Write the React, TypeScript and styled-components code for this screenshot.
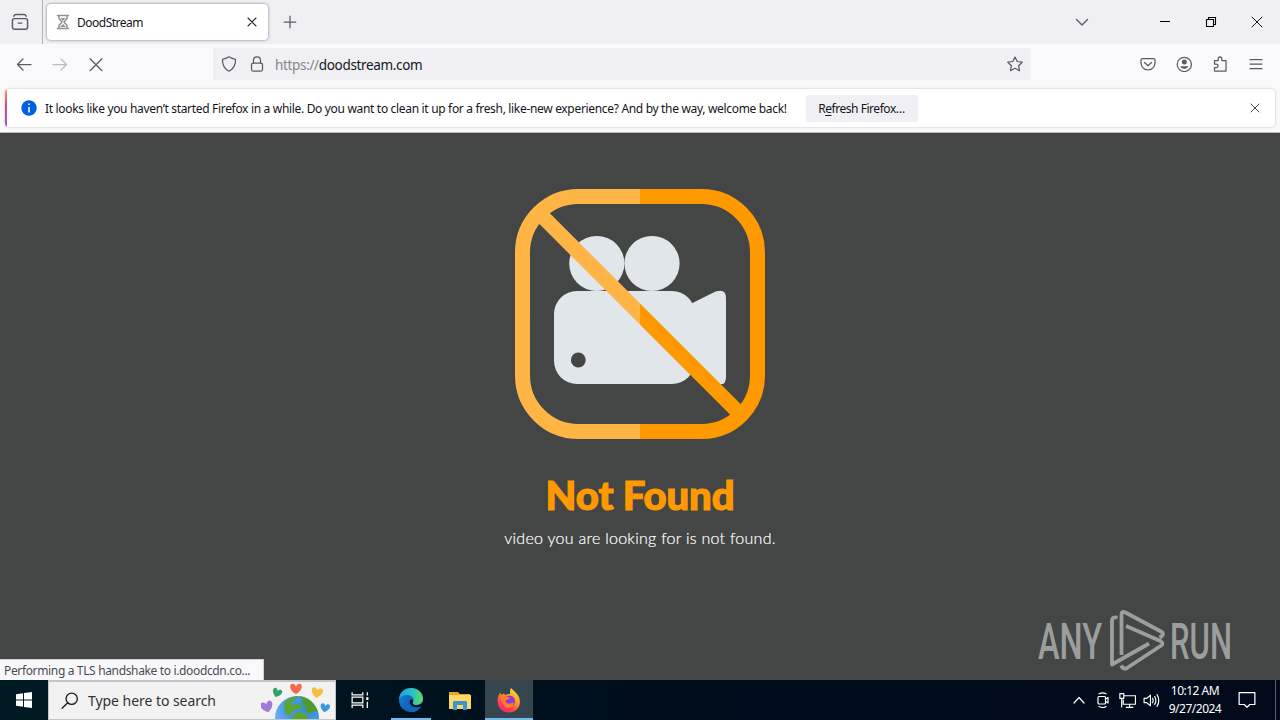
import React from 'react';
import styled, { createGlobalStyle } from 'styled-components';

const Global = createGlobalStyle`
  * { box-sizing: border-box; }
  body { margin: 0; background: #434645; font-family: "Noto Sans", "Open Sans", sans-serif; }
`;

const Screen = styled.div`
  width: 1280px;
  height: 720px;
  display: flex;
  flex-direction: column;
  overflow: hidden;
`;

const TabBar = styled.header`
  height: 44px;
  flex: none;
  display: flex;
  align-items: center;
  background: #f0eff4;
  color: #15141a;
`;

const Spacer = styled.div`
  flex: 1;
`;

const Slot = styled.div<{ $w: number; $color?: string }>`
  width: ${p => p.$w}px;
  height: 100%;
  flex: none;
  display: flex;
  align-items: center;
  justify-content: center;
  color: ${p => p.$color ?? '#5b5b66'};
`;

const ViewSlot = styled(Slot)`
  border-right: 1px solid #b2b1b8;
  padding-right: 2px;
  margin-right: 4px;
`;

const Tab = styled.div`
  width: 221px;
  height: 36px;
  padding: 0 8px;
  display: flex;
  align-items: center;
  background: #fff;
  border-radius: 4px;
  box-shadow: 0 0 3px rgba(0, 0, 0, 0.5);
`;

const TabTitle = styled.span`
  flex: 1;
  margin-left: 6px;
  padding-top: 1px;
  font-size: 12px;
  letter-spacing: -0.5px;
`;

const Toolbar = styled.div`
  height: 41px;
  flex: none;
  display: flex;
  align-items: center;
  padding: 0 6px 1px 0;
  background: #f9f9fb;
`;

const UrlBar = styled.div`
  width: 817px;
  height: 32px;
  margin-left: 97px;
  padding: 0 7px 0 8px;
  display: flex;
  align-items: center;
  gap: 12px;
  background: #f0f0f4;
  color: #5b5b66;
`;

const Url = styled.span`
  flex: 1;
  margin-left: -2px;
  padding-top: 1px;
  font-size: 13.5px;
  letter-spacing: -0.34px;
  color: #85848c;
  b { font-weight: 400; color: #15141a; }
`;

const NoticeArea = styled.div`
  height: 48px;
  flex: none;
  padding: 4px 5px 5px;
  background: #f9f9fa;
  border-bottom: 1px solid #bdbdbd;
`;

const Notice = styled.div`
  height: 38px;
  display: flex;
  align-items: center;
  padding-right: 12px;
  background: #fff;
  border-radius: 4px;
  box-shadow: 0 0 2px rgba(0, 0, 0, 0.3);
  overflow: hidden;
  font-size: 12px;
  color: #15141a;
`;

const Accent = styled.div`
  width: 2px;
  height: 100%;
  margin-right: 14px;
  background: linear-gradient(#ff9a50, #d9488c 45%, #9059d0);
`;

const NoticeText = styled.span`
  width: 761px;
  margin-left: 8px;
  padding-top: 1px;
  white-space: nowrap;
  letter-spacing: -0.323px;
`;

const RefreshButton = styled.button`
  width: 112px;
  height: 27px;
  padding: 1px 1px 0 0;
  border: 0;
  border-radius: 3px;
  background: #f0eff3;
  color: #15141a;
  font: inherit;
  letter-spacing: -0.45px;
  u { text-underline-offset: 2px; }
`;

const Page = styled.main`
  height: 547px;
  flex: none;
  position: relative;
  display: flex;
  flex-direction: column;
  align-items: center;
  padding-top: 56px;
  background: #434645;
  font-family: Lato, sans-serif;
`;

const Title = styled.h1`
  margin: 32px 0 0;
  font-size: 40px;
  line-height: 48px;
  font-weight: 900;
  letter-spacing: -0.1px;
  color: #ff9900;
  -webkit-text-stroke: 1.2px #ff9900;
`;

const Subtitle = styled.p`
  margin: 7px 0 0;
  font-size: 16px;
  line-height: 24px;
  font-weight: 300;
  letter-spacing: 0.27px;
  color: #fff;
  -webkit-text-stroke: 0.2px #fff;
`;

const Status = styled.div`
  position: absolute;
  left: 0;
  bottom: 0;
  width: 264px;
  height: 21px;
  padding-left: 4px;
  line-height: 22px;
  background: #f9f9fb;
  border-top: 1px solid #d0d0d4;
  border-right: 1px solid #d0d0d4;
  font-family: "Noto Sans", sans-serif;
  font-size: 12px;
  letter-spacing: -0.35px;
  color: #4a4a52;
  white-space: nowrap;
`;

const Watermark = styled.div`
  position: absolute;
  right: 42px;
  bottom: 6px;
  height: 66px;
  svg { overflow: visible; }
`;

const Taskbar = styled.footer`
  height: 40px;
  flex: none;
  display: flex;
  align-items: center;
  background: linear-gradient(90deg, #001a24, #000e1c 50%, #020a1c);
  color: #fff;
`;

const Search = styled.div`
  width: 288px;
  height: 40px;
  display: flex;
  align-items: center;
  padding-left: 12px;
  background: #f2f2f2;
  border: 1px solid #c2c4c5;
  border-width: 2px 1px 1px 1px;
  color: #1c1c1c;
`;

const SearchText = styled.span`
  flex: 1;
  margin-left: 9px;
  font-size: 14px;
  letter-spacing: -0.05px;
  color: #333;
  white-space: nowrap;
`;

const TaskButton = styled.div<{ $active?: boolean; $running?: boolean }>`
  width: 48px;
  height: 40px;
  display: flex;
  align-items: center;
  justify-content: center;
  background: ${p => (p.$active ? '#35464f' : 'transparent')};
  box-shadow: ${p => (p.$running ? 'inset 0 -2px #76b9ed' : 'none')};
`;

const RunButton = styled(TaskButton)`
  width: 40px;
  margin: 0 6px 0 7px;
`;

const FolderButton = styled(TaskButton)`
  padding-right: 2px;
`;

const Clock = styled.div`
  width: 64px;
  display: flex;
  flex-direction: column;
  align-items: center;
  font-size: 12px;
  line-height: 18px;
  letter-spacing: -0.5px;
  white-space: nowrap;
`;

const DesktopEdge = styled.div`
  width: 5px;
  height: 40px;
  margin-left: 8px;
  border-left: 1px solid #5a606b;
`;

type IconProps = { s?: number; w?: number; vb?: number; children: React.ReactNode };
const Icon = ({ s = 16, w = 1.25, vb = 16, children }: IconProps) => (
  <svg width={s} height={s} viewBox={`0 0 ${vb} ${vb}`} fill="none" stroke="currentColor"
    strokeWidth={w} strokeLinecap="round" strokeLinejoin="round">{children}</svg>
);

const Cross = ({ s = 16, w = 1.2, inset = 3 }: { s?: number; w?: number; inset?: number }) => (
  <Icon s={s} w={w}><path d={`M${inset} ${inset}L${16 - inset} ${16 - inset}M${16 - inset} ${inset}L${inset} ${16 - inset}`} /></Icon>
);

const NoVideoArt = styled.svg`
  flex: none;
`;

const NoVideo = () => (
  <NoVideoArt width="250" height="250" viewBox="0 0 250 250">
    <defs>
      <linearGradient id="halves" gradientUnits="userSpaceOnUse" x1="0" y1="0" x2="250" y2="0">
        <stop offset=".5" stopColor="#ffb546" /><stop offset=".5" stopColor="#ff9900" />
      </linearGradient>
    </defs>
    <g fill="#e0e6e9">
      <circle cx="81.8" cy="74.5" r="27.6" />
      <circle cx="137" cy="74.5" r="27.6" />
      <rect x="39" y="102" width="141" height="93" rx="23" />
      <path d="M176 114.800L200 102.800Q211 99 211 109V188Q211 197 203 195L176 181Z" />
    </g>
    <circle cx="63.300" cy="171" r="7.400" fill="#434645" />
    <g fill="none" stroke="url(#halves)" strokeWidth="15">
      <rect x="7.500" y="7.500" width="235" height="235" rx="56" />
      <path d="M25 25L225 225" />
    </g>
  </NoVideoArt>
);

const AnyRun = () => (
  <svg width="200" height="66" viewBox="0 0 200 66" fill="none">
    <g fill="#9c9e9d" fontFamily="Roboto, sans-serif" fontSize="50" fontWeight="500">
      <text x="0" y="50.500" textLength="64" lengthAdjust="spacingAndGlyphs">ANY</text>
      <text x="132" y="50.500" textLength="62" lengthAdjust="spacingAndGlyphs">RUN</text>
    </g>
    <g stroke="#9c9e9d" strokeWidth="3.800" strokeLinejoin="round">
      <path d="M79.500 9.500Q74 8.500 74 12.500V56.500L111 35.500" />
      <path d="M83.500 47V6.500Q83.500 2.800 87 4.300L123 23.500Q126.500 25.500 124 28L121.500 29.500" />
      <path d="M88 18L122.500 33Q126.500 35.500 122.500 38L89 60Q85.500 62 83 57.500" />
    </g>
  </svg>
);

const Earth = () => (
  <svg width="74" height="37" viewBox="0 0 74 37">
    <defs>
      <radialGradient id="sea" cx=".7" cy=".3" r=".8">
        <stop offset="0" stopColor="#2f8fd8" /><stop offset=".6" stopColor="#4c9bea" /><stop offset="1" stopColor="#79b8f7" />
      </radialGradient>
      <path id="heart" d="M0 5C-8 0-6-6-2.500-5Q-.5-4.500 0-2.500Q.5-4.500 2.500-5C6-6 8 0 0 5Z" />
    </defs>
    <circle cx="36" cy="36" r="22" fill="url(#sea)" />
    <path d="M23 21Q29 14.500 37 14L35 17L29 21L32 23L38 22L42 25L38 28L34 27L31 31L27 34L24 30Z" fill="#5fa52c" />
    <path d="M38 14Q51 15 57 30L53 29L49 32L44 29L45 24L41 22L42 18Z" fill="#4f9a2a" />
    <path d="M30 37L33 32L40 30L46 33L47 37Z" fill="#5fa52c" />
    <use href="#heart" transform="translate(35 7) scale(1.05)" fill="#f26a4f" />
    <use href="#heart" transform="translate(16 11) rotate(20) scale(.85)" fill="#2fa26a" />
    <use href="#heart" transform="translate(56 11) rotate(10)" fill="#f8bd35" />
    <use href="#heart" transform="translate(6 25) rotate(-15) scale(1.1)" fill="#a47ad8" />
    <use href="#heart" transform="translate(64 26) rotate(10) scale(.85)" fill="#3d96e0" />
  </svg>
);

const Edge = () => (
  <svg width="26" height="26" viewBox="0 0 26 26">
    <defs>
      <linearGradient id="edgeTop" x1="0" y1=".4" x2="1" y2=".5">
        <stop offset="0" stopColor="#1b9ee0" /><stop offset=".55" stopColor="#2bc2c8" /><stop offset="1" stopColor="#62d95a" />
      </linearGradient>
      <linearGradient id="edgeLow" x1="0" y1="0" x2="1" y2="1">
        <stop offset="0" stopColor="#1583d8" /><stop offset="1" stopColor="#0c4fa0" />
      </linearGradient>
    </defs>
    <circle cx="13" cy="13" r="12" fill="url(#edgeLow)" />
    <path d="M1 13C1 5 7 1 13 1C20 1 25 6 25 11.500C25 16 21 18 18 18C15 18 14 16.500 15 15C17 12 14 8 9.500 8C5 8 2 10 1 13Z" fill="url(#edgeTop)" />
    <path d="M10 10C7 14 10 21 17 21C20 21 22 20 23.500 19C21 23 18 25 14 25C8 24 5 15 10 10Z" fill="#1167bd" />
    <path d="M14.500 12.500C16 16 14 15 15 17C17 19.500 22 18 25.200 15.500L24.500 19C18 22 11 19 11.500 14Q12 12 14.500 12.500Z" fill="#001620" />
  </svg>
);

const Folder = () => (
  <svg width="22" height="19" viewBox="0 0 22 19">
    <path d="M0 1H9L11 3H21V18H0Z" fill="#e9a520" />
    <path d="M0 4H22V18H0Z" fill="#ffd766" />
    <path d="M4 19V11Q4 10 5 10H17Q18 10 18 11V19H14V14H8V19Z" fill="#3c94d2" />
  </svg>
);

const Firefox = () => (
  <svg width="24" height="25" viewBox="0 0 24 25">
    <defs>
      <linearGradient id="fox" x1=".8" y1="0" x2=".2" y2="1">
        <stop offset="0" stopColor="#ffe23a" /><stop offset=".4" stopColor="#ff9a26" /><stop offset=".75" stopColor="#ff3d4e" /><stop offset="1" stopColor="#e5258b" />
      </linearGradient>
    </defs>
    <path d="M14 0C16 2 20 5 22 9C25 17 20 24.500 12 24.500C5 24.500 0 19 .5 12C.7 9 2 6 3.500 4.500L4 7L7 5.500L8 7C10 6.500 11 6 13 6C13 3 13 1 14 0Z" fill="url(#fox)" />
    <circle cx="12.500" cy="13" r="5.500" fill="#8a3ed6" />
    <path d="M4 8Q8 6 11 9L13 10Q11 12 9 12Q8 14 10 15Q13 17 16 14Q17 20 11 20Q5 19 4 8Z" fill="#ff7a2c" />
  </svg>
);

export default function App() {
  return (
    <Screen>
      <Global />
      <TabBar>
        <ViewSlot $w={43}>
          <Icon s={18} w={1.3}><rect x="1.300" y="5" width="13.400" height="9.500" rx="1.800" /><path d="M2.500 2.800Q3 1.300 4.500 1.300H11.500Q13 1.300 13.500 2.800M6.500 9H9.500" /></Icon>
        </ViewSlot>
        <Tab>
          <Slot $w={16} $color="#8f8f96">
            <Icon s={16} w={1.5}><path d="M2.500 1.500H13.500M2.500 14.500H13.500M4 2V4.500L7 8L4 11.500V14M12 2V4.500L9 8L12 11.500V14" /><path d="M5.500 4H10.500L8 7ZM5 13L8 10L11 13Z" fill="currentColor" stroke="none" /></Icon>
          </Slot>
          <TabTitle>DoodStream</TabTitle>
          <Slot $w={16} $color="#2b2a33"><Cross inset={4} w={1.1} /></Slot>
        </Tab>
        <Slot $w={43}><Icon><path d="M8 2.200V13.800M2.200 8H13.800" /></Icon></Slot>
        <Spacer />
        <Slot $w={40}><Icon w={1.4}><path d="M2.500 5.500L8 11L13.500 5.500" /></Icon></Slot>
        <Slot $w={40} />
        <Slot $w={46} $color="#000"><Icon w={1}><path d="M3 7.500H13" strokeLinecap="butt" /></Icon></Slot>
        <Slot $w={46} $color="#000"><Icon w={1.1}><path d="M3.500 5.500H10.500V12.500H3.500ZM5.500 5.500V3.500H12.500V10.500H10.500" /></Icon></Slot>
        <Slot $w={46} $color="#000"><Cross w={0.9} /></Slot>
      </TabBar>
      <Toolbar>
        <Slot $w={6} />
        <Slot $w={36}><Icon><path d="M15 8.500H1.500M7 3L1.500 8.500L7 14" /></Icon></Slot>
        <Slot $w={36} $color="#bdbcc3"><Icon><path d="M1 8.500H14.500M9 3L14.500 8.500L9 14" /></Icon></Slot>
        <Slot $w={36}><Icon><path d="M2 2.700L14 14.700M14 2.700L2 14.700" /></Icon></Slot>
        <Slot $w={2} />
        <UrlBar>
          <Icon><path d="M8 .8Q11 2.800 14.500 3.300Q15 11.500 8 15.200Q1 11.500 1.500 3.300Q5 2.800 8 .8Z" /></Icon>
          <Icon><rect x="2.500" y="7" width="11" height="8" rx="1.500" /><path d="M4.500 7V4.300Q4.500 .8 8 .8Q11.500 .8 11.500 4.300V7" /></Icon>
          <Url>https://<b>doodstream.com</b></Url>
          <Icon><path d="M8 1L10.200 5.500L15.200 6.200L11.600 9.700L12.500 14.700L8 12.300L3.500 14.700L4.400 9.700L.8 6.200L5.800 5.500Z" /></Icon>
        </UrlBar>
        <Spacer />
        <Slot $w={36}><Icon><path d="M2.500 2.500H13.500Q15 2.500 15 4V7Q14.500 13.500 8 14Q1.500 13.500 1 7V4Q1 2.500 2.500 2.500ZM4.500 6.500L8 9.700L11.500 6.500" /></Icon></Slot>
        <Slot $w={36}><Icon><circle cx="8.300" cy="8.400" r="7.100" /><circle cx="8.300" cy="6" r="2.500" fill="currentColor" stroke="none" /><path d="M4.100 10.200H12.500Q11.300 12.900 8.300 12.900Q5.300 12.900 4.100 10.200Z" fill="currentColor" stroke="none" /></Icon></Slot>
        <Slot $w={36}><Icon><path d="M2.500 4.500H6.200V3Q6.200 .8 8 .8Q9.800 .8 9.800 3V4.500H14V15H2.500V11.500H4Q6 11.500 6 9.700Q6 8 4 8H2.500Z" /></Icon></Slot>
        <Slot $w={36}><Icon><path d="M2 3.500H14M2 8H14M2 12.500H14" /></Icon></Slot>
      </Toolbar>
      <NoticeArea>
        <Notice>
          <Accent />
          <svg width="16" height="16" viewBox="0 0 16 16"><circle cx="8" cy="8" r="7.700" fill="#0060df" /><path d="M8 3.500V5M8 7V12.500" stroke="#fff" strokeWidth="1.500" /></svg>
          <NoticeText>It looks like you haven’t started Firefox in a while. Do you want to clean it up for a fresh, like-new experience? And by the way, welcome back!</NoticeText>
          <RefreshButton>R<u>e</u>fresh Firefox…</RefreshButton>
          <Spacer />
          <Cross inset={4} w={0.8} />
        </Notice>
      </NoticeArea>
      <Page>
        <NoVideo />
        <Title>Not Found</Title>
        <Subtitle>video you are looking for is not found.</Subtitle>
        <Status>Performing a TLS handshake to i.doodcdn.co...</Status>
        <Watermark><AnyRun /></Watermark>
      </Page>
      <Taskbar>
        <Slot $w={48}>
          <svg width="16" height="16" viewBox="0 0 16 16" fill="#fff"><path d="M0 2.300L7 1.300V7.500H0ZM8 1.100L16 0V7.500H8ZM0 8.500H7V14.700L0 13.700ZM8 8.500H16V16L8 14.900Z" /></svg>
        </Slot>
        <Search>
          <Icon s={18} w={1.2}><circle cx="9.500" cy="6" r="5" /><path d="M6 9.500L1 14.500" /></Icon>
          <SearchText>Type here to search</SearchText>
          <Earth />
        </Search>
        <TaskButton>
          <Icon s={18} w={1.1}><path d="M1 1V3.500H10.500V1M1 5.500H10.500V10.500H1ZM1 15V12.500H10.500V15M14.500 1V4M14.500 9.500V15" strokeLinecap="butt" strokeLinejoin="miter" /><path d="M13.500 5.500H15.500V8H13.500Z" fill="currentColor" stroke="none" /></Icon>
        </TaskButton>
        <RunButton $running><Edge /></RunButton>
        <FolderButton><Folder /></FolderButton>
        <TaskButton $active $running><Firefox /></TaskButton>
        <Spacer />
        <Slot $w={24} $color="#fff"><Icon w={1.2}><path d="M3 11L8 5.500L13 11" /></Icon></Slot>
        <Slot $w={24} $color="#fff"><Icon w={1.2}><rect x="3" y="4.500" width="7.500" height="7.500" rx="1" /><path d="M10.500 7L13 5.500V11L10.500 9.500M4 1.800Q8 -.2 11 1.800M4 14.500Q8 16.500 11 14.500" /></Icon></Slot>
        <Slot $w={24} $color="#fff"><Icon s={17} w={1.1}><path d="M5 3.500H15.500V11.500H4V7M10 11.500V14.500M6.500 14.500H13.500M.8 1.500H4.500V6H.8ZM2.500 6V14.500" strokeLinecap="butt" /></Icon></Slot>
        <Slot $w={24} $color="#fff"><Icon s={17} w={1.1}><path d="M1 6H3.500L7 3V13L3.500 10H1ZM9 6Q10.200 8 9 10M11 4.300Q13.300 8 11 11.700M13.200 2.500Q16.500 8 13.200 13.500" /></Icon></Slot>
        <Clock><span>10:12 AM</span><span>9/27/2024</span></Clock>
        <Slot $w={40} $color="#fff"><Icon s={18} w={1.1}><path d="M1 1.500H15V12H10.500L8 14.500L5.500 12H1Z" /></Icon></Slot>
        <DesktopEdge />
      </Taskbar>
    </Screen>
  );
}
